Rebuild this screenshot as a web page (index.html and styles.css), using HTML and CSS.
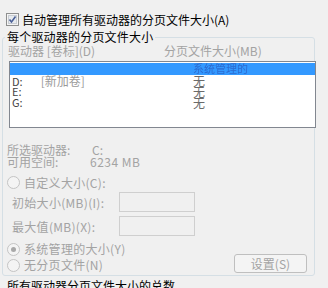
FILE: index.html
```html
<!DOCTYPE html>
<html lang="zh-CN">
<head>
    <meta charset="UTF-8">
    <title>虚拟内存</title>
    <link rel="stylesheet" href="styles.css">
</head>
<body>

    <div class="auto-row">
        <svg class="checkbox" width="13" height="13" viewBox="0 0 13 13">
            <rect x="0.5" y="0.5" width="12" height="12" fill="#f4f4f4" stroke="#8e8f8f"/>
            <rect x="2.5" y="2.5" width="8" height="8" fill="#e6eaee" stroke="#c8ccd2"/>
            <path d="M3.5 6.5 L5.5 9 L9.5 3.5" fill="none" stroke="#4a5f97" stroke-width="1.6"/>
        </svg>
        <span>自动管理所有驱动器的分页文件大小(A)</span>
    </div>

    <fieldset class="group">
        <legend>每个驱动器的分页文件大小</legend>

        <div class="list-header">
            <span class="col-drive">驱动器 [卷标](D)</span>
            <span>分页文件大小(MB)</span>
        </div>

        <div class="listbox">
            <div class="row selected">
                <span class="col-drive"></span>
                <span class="col-size blur">系统管理的</span>
            </div>
            <div class="row">
                <span class="col-drive">D:<span class="label">[新加卷]</span></span>
                <span class="col-size">无</span>
            </div>
            <div class="row">
                <span class="col-drive">E:</span>
                <span class="col-size">无</span>
            </div>
            <div class="row">
                <span class="col-drive">G:</span>
                <span class="col-size">无</span>
            </div>
        </div>

        <div class="info">
            <div class="info-line"><span class="info-key">所选驱动器:</span><span>C:</span></div>
            <div class="info-line"><span class="info-key">可用空间:</span><span class="info-val">6234 MB</span></div>
        </div>

        <div class="radio-line first">
            <span class="radio"></span>
            <span>自定义大小(C):</span>
        </div>

        <div class="edit-line">
            <span class="edit-label">初始大小(MB)(I):</span>
            <span class="edit"></span>
        </div>
        <div class="edit-line second">
            <span class="edit-label">最大值(MB)(X):</span>
            <span class="edit"></span>
        </div>

        <div class="bottom">
            <div class="radios">
                <div class="radio-line">
                    <span class="radio checked"></span>
                    <span>系统管理的大小(Y)</span>
                </div>
                <div class="radio-line">
                    <span class="radio"></span>
                    <span>无分页文件(N)</span>
                </div>
            </div>
            <button class="btn" disabled>设置(S)</button>
        </div>
    </fieldset>

    <div class="total">所有驱动器分页文件大小的总数</div>

</body>
</html>
```

FILE: styles.css
```css
body {
    margin: 0;
    background-color: #f0f0f0;
    font-family: "Noto Sans CJK SC", "DejaVu Sans", sans-serif;
    font-size: 12px;
    color: #000;
    overflow: hidden;
}

.auto-row {
    display: flex;
    align-items: center;
    gap: 3px;
    height: 17px;
    line-height: 17px;
    padding: 11px 0 0 6px;
}

.checkbox {
    display: block;
}

.group {
    margin: 1px 13px 0 2px;
    padding: 0 0 2px 5px;
    border: 1px solid #d5dfe5;
    border-radius: 3px;
}

.group legend {
    padding: 0 2px;
    margin-left: -3px;
    line-height: 16px;
    letter-spacing: 0.2px;
}

.list-header {
    display: flex;
    height: 15px;
    line-height: 14px;
    margin-top: -1px;
    color: #a3a3a3;
}

.col-drive {
    width: 156px;
    flex-shrink: 0;
}

.listbox {
    height: 64px;
    margin: 2px -2px 0 1px;
    padding-top: 1px;
    border: 1px solid #828790;
    background-color: #fff;
}

.row {
    display: flex;
    height: 11px;
    line-height: 11px;
    font-size: 11px;
    padding-left: 2px;
    color: #444;
}

.row.selected {
    height: 12px;
    background-color: #3399ff;
}

.row .col-drive {
    width: 181px;
}

.row .label {
    margin-left: 18px;
    font-size: 12px;
    color: #9a9a9a;
}

.col-size {
    color: #6a6a6a;
    font-size: 12px;
}

.blur {
    color: rgba(40, 70, 170, 0.55);
    font-size: 11px;
    filter: blur(0.6px);
}

.info {
    margin-top: 16px;
    margin-left: -1px;
    color: #a3a3a3;
}

.info-line {
    display: flex;
    height: 12px;
    line-height: 12px;
}

.info-key {
    width: 85px;
}

.info-val {
    margin-left: -2px;
    letter-spacing: 0.5px;
}

.radio-line {
    display: flex;
    align-items: center;
    gap: 4px;
    height: 16px;
    line-height: 16px;
    margin-left: -1px;
    color: #a3a3a3;
    letter-spacing: 0.3px;
}

.radio-line.first {
    margin-top: 7px;
    height: 15px;
}

.radio {
    width: 11px;
    height: 11px;
    border: 1px solid #c4c4c4;
    border-radius: 50%;
    background-color: #f4f4f4;
    display: flex;
    align-items: center;
    justify-content: center;
}

.radio.checked::after {
    content: "";
    width: 5px;
    height: 5px;
    border-radius: 50%;
    background-color: #a8a8a8;
}

.edit-line {
    display: flex;
    align-items: center;
    height: 20px;
    margin-top: 2px;
    color: #a3a3a3;
    letter-spacing: 0.3px;
}

.edit-line.second {
    margin-top: 4px;
}

.edit-label {
    width: 107px;
    padding-left: 4px;
}

.edit {
    width: 74px;
    height: 18px;
    border: 1px solid #cfcfcf;
    background-color: #f0f0f0;
}

.bottom {
    display: flex;
    justify-content: space-between;
    margin-top: 5px;
}

.btn {
    align-self: flex-end;
    width: 73px;
    height: 19px;
    margin-right: 7px;
    padding: 0;
    border: 1px solid #bfbfbf;
    border-radius: 3px;
    background-color: #f4f4f4;
    color: #a3a3a3;
    font-family: inherit;
    font-size: 12px;
    line-height: 17px;
}

.total {
    margin: 3px 0 0 7px;
    line-height: 14px;
}
```
